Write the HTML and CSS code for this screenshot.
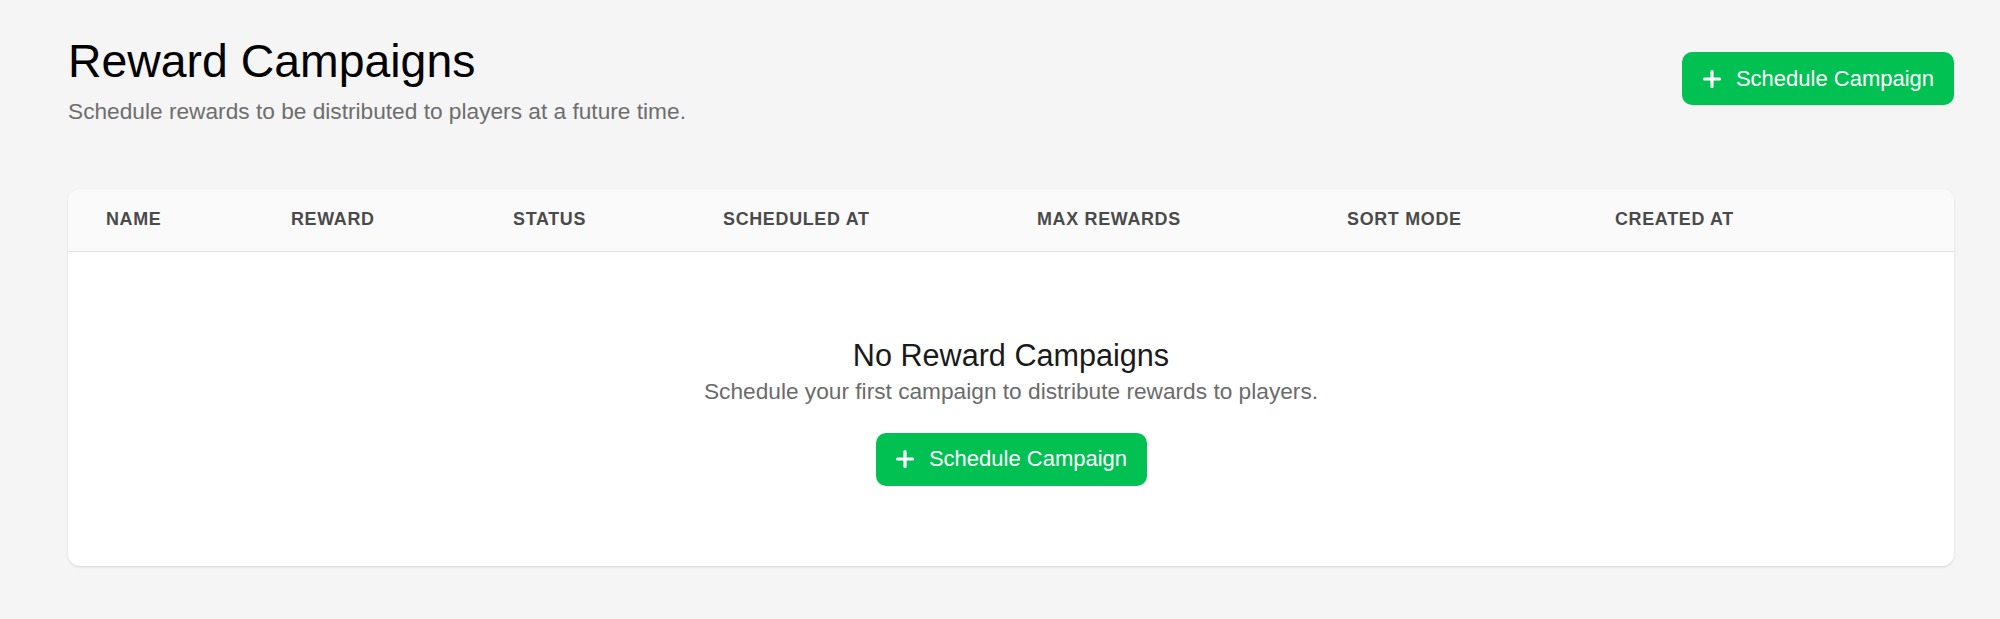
FILE: index.html
```html
<!DOCTYPE html>
<html lang="en">
<head>
<meta charset="utf-8">
<title>Reward Campaigns</title>
<link rel="stylesheet" href="styles.css">
</head>
<body>
<main class="page">
  <header class="page-header">
    <div class="titles">
      <h1 class="page-title">Reward Campaigns</h1>
      <p class="page-subtitle">Schedule rewards to be distributed to players at a future time.</p>
    </div>
    <button class="btn btn-header" type="button">
      <svg class="btn-icon" viewBox="0 0 20 20" aria-hidden="true"><path d="M10 2.5v15M2.5 10h15" /></svg>
      <span>Schedule Campaign</span>
    </button>
  </header>

  <section class="card">
    <table class="table">
      <colgroup>
        <col class="c-name"><col class="c-reward"><col class="c-status"><col class="c-scheduled"><col class="c-max"><col class="c-sort"><col class="c-created">
      </colgroup>
      <thead>
        <tr>
          <th>Name</th>
          <th>Reward</th>
          <th>Status</th>
          <th>Scheduled At</th>
          <th>Max Rewards</th>
          <th>Sort Mode</th>
          <th>Created At</th>
        </tr>
      </thead>
      <tbody>
        <tr>
          <td colspan="7" class="empty-cell">
            <div class="empty">
              <h2 class="empty-title">No Reward Campaigns</h2>
              <p class="empty-text">Schedule your first campaign to distribute rewards to players.</p>
              <button class="btn btn-empty" type="button">
                <svg class="btn-icon" viewBox="0 0 20 20" aria-hidden="true"><path d="M10 2.5v15M2.5 10h15" /></svg>
                <span>Schedule Campaign</span>
              </button>
            </div>
          </td>
        </tr>
      </tbody>
    </table>
  </section>
</main>
</body>
</html>
```
FILE: styles.css
```css
* { box-sizing: border-box; }

html, body {
  margin: 0;
  padding: 0;
  background: #f5f5f5;
}

body {
  font-family: "Liberation Sans", Arial, Helvetica, sans-serif;
  color: #111;
}

.page {
  padding: 34px 46px 40px 68px;
}

.page-header {
  display: flex;
  justify-content: space-between;
  align-items: flex-start;
}

.page-title {
  margin: 0;
  font-size: 46.4px;
  line-height: 55px;
  font-weight: 400;
  color: #000;
}

.page-subtitle {
  margin: 6px 0 0;
  font-size: 22.7px;
  line-height: 32px;
  color: #6e6e6e;
}

.btn {
  display: inline-flex;
  align-items: center;
  justify-content: center;
  gap: 14px;
  height: 53px;
  width: 272px;
  padding: 0;
  border: none;
  border-radius: 10px;
  background: #02c153;
  color: #fff;
  font-family: "Liberation Sans", Arial, Helvetica, sans-serif;
  font-size: 22px;
  cursor: pointer;
}

.btn-header {
  margin-top: 18px;
}

.btn-icon {
  width: 20px;
  height: 20px;
  fill: none;
  stroke: #fff;
  stroke-width: 3.2;
  stroke-linecap: round;
}

.card {
  margin-top: 62px;
  background: #fff;
  border-radius: 12px;
  box-shadow: 0 1px 3px rgba(0, 0, 0, 0.09), 0 1px 2px rgba(0, 0, 0, 0.05);
  overflow: hidden;
}

.table {
  width: 100%;
  border-collapse: collapse;
  table-layout: fixed;
}

.c-name { width: 185px; }
.c-reward { width: 222px; }
.c-status { width: 210px; }
.c-scheduled { width: 314px; }
.c-max { width: 310px; }
.c-sort { width: 268px; }
.c-created { width: auto; }

.table th {
  height: 62px;
  padding: 0 0 0 38px;
  text-align: left;
  vertical-align: middle;
  background: #fafafa;
  border-bottom: 1px solid #e4e4e4;
  font-size: 17.9px;
  font-weight: 700;
  letter-spacing: 0.7px;
  text-transform: uppercase;
  color: #4a4a4a;
}

.empty-cell {
  padding: 0;
}

.empty {
  display: flex;
  flex-direction: column;
  align-items: center;
  padding: 85px 0 80px;
}

.empty-title {
  margin: 0;
  font-size: 30.6px;
  line-height: 37px;
  font-weight: 400;
  color: #1a1a1a;
}

.empty-text {
  margin: 1px 0 0;
  font-size: 22.7px;
  line-height: 32px;
  color: #6b6b6b;
}

.btn-empty {
  margin-top: 26px;
  width: 271px;
}
```
